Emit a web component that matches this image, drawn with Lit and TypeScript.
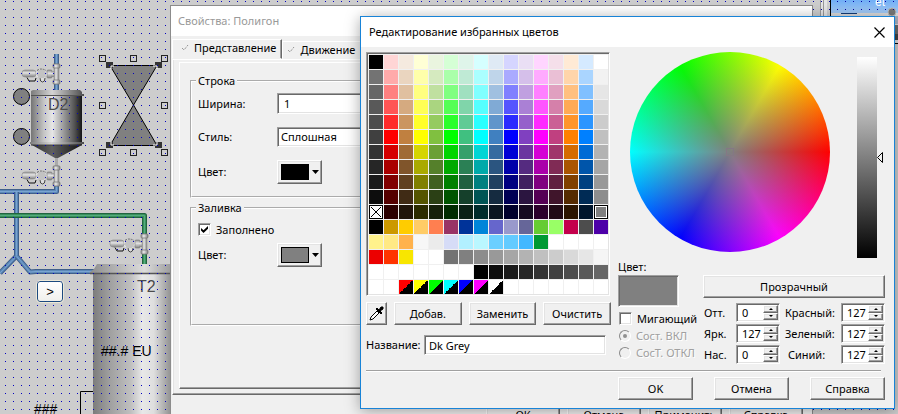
import { LitElement, html, svg, css } from "lit";
import { customElement, property, state } from "lit/decorators.js";
import { classMap } from "lit/directives/class-map.js";
import { styleMap } from "lit/directives/style-map.js";

const controls = css`
  * {
    box-sizing: border-box;
  }
  button,
  input,
  select {
    margin: 0;
    font: inherit;
    color: inherit;
    border-radius: 0;
  }
  .btn {
    display: flex;
    align-items: center;
    justify-content: center;
    height: 23px;
    padding: 0;
    background: #f0f0f0;
    border: 1px solid;
    border-color: #fff #696969 #696969 #fff;
    box-shadow: inset -1px -1px #a0a0a0, inset 1px 1px #e3e3e3;
    white-space: nowrap;
  }
  .sunken {
    border: 1px solid;
    border-color: #a0a0a0 #fff #fff #a0a0a0;
    box-shadow: inset 1px 1px #696969, inset -1px -1px #e3e3e3;
  }
  .field {
    appearance: none;
    background: #fff;
    outline: none;
    min-width: 0;
  }
  .check {
    appearance: none;
    width: 13px;
    height: 13px;
    flex: none;
    background: #fff;
    display: grid;
    place-items: center;
  }
  .check:checked::after {
    content: "";
    width: 7px;
    height: 7px;
    background: #000;
    clip-path: polygon(0 30%, 36% 62%, 100% 0, 100% 38%, 36% 100%, 0 66%);
  }
`;

const valve = (x: number, y: number) => svg`
  <g transform="translate(${x} ${y})">
    <rect x="-30" y="6" width="14" height="7" rx="3" fill="url(#steelV)" stroke="#8c8c8c" stroke-width=".6" />
    <path d="M-25 13.500l2 3.500h6l1 -3" fill="none" stroke="#111" />
    <circle cx="-10.500" cy="10" r="5" fill="#c2c2c2" stroke="#f4f4f4" stroke-dasharray="2 2" />
    <path d="M-15 6.500q4 -3 9 0" fill="none" stroke="#444" stroke-width=".8" stroke-dasharray="2 1" />
    <path d="M-12 14q0 4 2.500 4q2.500 0 2.500 -4" fill="#ddd" stroke="#222" stroke-width=".8" />
    <rect x="-5" y="6" width="5" height="8" rx="1" fill="url(#steelV)" stroke="#777" stroke-width=".6" />
    <rect x="-1" y="7" width="3" height="6" fill="url(#steelV)" />
    <rect x="2" y="0" width="5" height="20" fill="url(#steelH)" stroke="#888" stroke-width=".5" />
    <rect x="1" y="0" width="7" height="4" rx="1" fill="url(#steelH)" stroke="#707070" stroke-width=".7" />
    <rect x="1" y="16" width="7" height="4" rx="1" fill="url(#steelH)" stroke="#707070" stroke-width=".7" />
  </g>
`;

const pipe = (d: string, dark: string, mid: string, light: string) => svg`
  <path d=${d} fill="none" stroke=${dark} stroke-width="5" stroke-linejoin="round" />
  <path d=${d} fill="none" stroke=${mid} stroke-width="3" stroke-linejoin="round" />
  <path d=${d} fill="none" stroke=${light} stroke-width="1" stroke-linejoin="round" />
`;

const blue = (d: string) => pipe(d, "#3f5f8a", "#5c88b8", "#7aa4d0");
const green = (d: string) => pipe(d, "#21643f", "#38905c", "#54ac7c");

@customElement("plant-scene")
export class PlantScene extends LitElement {
  static styles = [
    controls,
    css`
      :host {
        position: absolute;
        inset: 0;
        background: #cdcdcd;
        font: 16px "Liberation Sans", Arial, sans-serif;
      }
      .drawing {
        position: absolute;
        top: 0;
        left: 0;
        width: 100%;
        height: 100%;
      }
      .corner {
        position: absolute;
        top: 0;
        right: 0;
      }
      .go {
        position: absolute;
        left: 37px;
        top: 281px;
        width: 26px;
        height: 21px;
        padding: 0;
        background: linear-gradient(#fff, #f0f0ec);
        border: 1px solid #1c4a80;
        border-radius: 3px;
        outline: 1px solid #ece9d8;
        font-size: 13px;
        line-height: 18px;
        color: #000;
      }
    `,
  ];

  render() {
    const handles = [
      [102, 58], [133, 58], [164, 58], [102, 105],
      [164, 105], [102, 152], [133, 152], [164, 152],
    ];
    const nodes = [[109, 65], [158, 65], [109, 145], [158, 145]];
    return html`
      <svg class="drawing" role="img" aria-label="Мнемосхема">
        <defs>
          <linearGradient id="steelV" x2="0" y2="1">
            <stop stop-color="#8f8f8f" /><stop offset=".4" stop-color="#e4e4e4" /><stop offset="1" stop-color="#808080" />
          </linearGradient>
          <linearGradient id="steelH">
            <stop stop-color="#8f8f8f" /><stop offset=".4" stop-color="#e8e8e8" /><stop offset="1" stop-color="#808080" />
          </linearGradient>
          <linearGradient id="tankSmall">
            <stop stop-color="#747474" /><stop offset=".25" stop-color="#c4c4c4" /><stop offset=".42" stop-color="#e6e6e6" />
            <stop offset=".6" stop-color="#a8a8a8" /><stop offset=".85" stop-color="#545454" /><stop offset="1" stop-color="#161616" />
          </linearGradient>
          <linearGradient id="rimSmall">
            <stop stop-color="#7c7c7c" /><stop offset=".4" stop-color="#d4d4d4" /><stop offset="1" stop-color="#4c4c4c" />
          </linearGradient>
          <linearGradient id="coneSmall">
            <stop stop-color="#2c2c2c" /><stop offset=".4" stop-color="#606060" /><stop offset="1" stop-color="#111" />
          </linearGradient>
          <linearGradient id="tankBig">
            <stop stop-color="#7c7c7c" /><stop offset=".18" stop-color="#a0a0a0" /><stop offset=".4" stop-color="#c0c0c0" />
            <stop offset=".52" stop-color="#e8e8e8" /><stop offset=".64" stop-color="#dedede" /><stop offset=".8" stop-color="#999" />
            <stop offset="1" stop-color="#707070" />
          </linearGradient>
          <linearGradient id="lidBig">
            <stop stop-color="#8c8c8c" /><stop offset=".5" stop-color="#dcdcdc" /><stop offset=".75" stop-color="#999" />
            <stop offset="1" stop-color="#8a8a8a" />
          </linearGradient>
          <pattern id="gridDots" width="8" height="8" patternUnits="userSpaceOnUse">
            <rect x="5" y="1" width="1" height="1" fill="#0000c0" />
          </pattern>
        </defs>

        ${blue("M56.500 54V92")}
        ${valve(52, 64)}
        <circle cx="21.500" cy="96.500" r="8" fill="#808080" stroke="#000" />
        <circle cx="21.500" cy="136.500" r="8" fill="#808080" stroke="#000" />
        <rect x="31" y="95" width="51" height="50" fill="url(#tankSmall)" />
        <path d="M33 90H80L82 92V94H84V96H31V91Z" fill="url(#rimSmall)" />
        <path d="M31 95.500H83" stroke="#555" />
        <path d="M32 145H82L58 158H55Z" fill="url(#coneSmall)" />
        <path d="M30 142H84V144H30Z" fill="url(#rimSmall)" />
        <path d="M31 145H82" stroke="#3c3c3c" />
        <rect x="55" y="158" width="3" height="8" fill="#aaa" />
        <text x="48" y="110" fill="#4c4c4c">D2</text>

        ${blue("M56.500 186V191.500H0")}
        ${blue("M16.500 192V256L0 273")}
        ${blue("M16.500 256L30 272L36 271.500H96")}
        ${valve(52, 166)}
        ${green("M0 215.500H144.500V266")}
        ${valve(140, 234)}

        <path d="M97 264H200V273H89L94 269Z" fill="url(#lidBig)" />
        <rect x="93" y="274" width="95" height="160" fill="url(#tankBig)" />
        <path d="M90 273.500H200" stroke="#555" stroke-width="1.500" />
        <text x="137" y="292" fill="#4c4c4c">T2</text>
        <text x="101" y="356" font-size="14">##.# EU</text>
        <path d="M93 391.500H80.500V420" fill="none" stroke="#000" />
        <text x="34" y="414" font-size="14">###</text>

        <path d="M110 65.500H157L133.500 105L157 145.500H110L133.500 105Z" fill="#808080" stroke="#000" />
        ${handles.map(([x, y]) => svg`<rect x=${x - 2.5} y=${y - 2.5} width="6" height="6" fill="none" stroke="#222" />`)}
        ${nodes.map(([x, y]) => svg`<rect x=${x - 3} y=${y - 3} width="7" height="6" fill="#333" />`)}
        <path d="M111 69V66H114M153 66H157V69M111 142V145H114M153 145H157V142" fill="none" stroke="#fff" />

        <rect width="100%" height="100%" fill="url(#gridDots)" />
      </svg>

      <svg class="corner" width="86" height="44" aria-hidden="true">
        <defs>
          <linearGradient id="sky" x2="0" y2="1">
            <stop stop-color="#70aef6" /><stop offset="1" stop-color="#a4cbf6" />
          </linearGradient>
          <pattern id="cornerDots" x="1" y="1" width="8" height="8" patternUnits="userSpaceOnUse">
            <rect width="1" height="1" fill="#0000a0" />
          </pattern>
        </defs>
        <rect x="8" width="7" height="44" fill="#e6e6e6" />
        <path d="M8.500 0V44M11.500 0V44" stroke="#999" />
        <rect x="15" width="3" height="44" fill="#cfcfcf" />
        <rect x="18" width="68" height="13" fill="url(#sky)" />
        <rect x="18" y="13" width="68" height="31" fill="#dcdcdc" />
        <path d="M18.500 0V44M83 43.500H86" stroke="#000" />
        <path d="M29 13.500H45" stroke="#123c78" />
        <text x="63" y="6" font-size="12" fill="#fff">et</text>
        <circle cx="80" cy="12" r="4" fill="#777" stroke="#bbb" />
        <rect x="83" y="16" width="3" height="8" fill="#a8aebc" />
        <rect x="83" y="25" width="3" height="9" fill="#6a6a6a" />
        <rect x="83" y="34" width="3" height="6" fill="#444" />
        <rect width="86" height="44" fill="url(#cornerDots)" />
      </svg>
      <button class="go">&gt;</button>
    `;
  }
}

@customElement("color-drop")
export class ColorDrop extends LitElement {
  @property() color = "#000";
  @property() label = "";
  static styles = [
    controls,
    css`
      .drop {
        width: 45px;
        height: 24px;
        justify-content: flex-start;
        gap: 3px;
        padding-left: 3px;
      }
      .chip {
        width: 28px;
        height: 16px;
        border: 1px solid #000;
      }
    `,
  ];
  render() {
    return html`<button class="btn drop" aria-label=${this.label}>
      <span class="chip" style=${styleMap({ background: this.color })}></span>
      <svg width="7" height="4"><path d="M0 0H7L3.500 4Z" /></svg>
    </button>`;
  }
}

@customElement("properties-window")
export class PropertiesWindow extends LitElement {
  static styles = [
    controls,
    css`
      :host {
        position: absolute;
        left: 170px;
        right: 85px;
        top: 5px;
        background: #f0f0f0;
        border: 1px solid #8c8c8c;
        font: 11px "Noto Sans", "Open Sans", sans-serif;
        line-height: 14px;
        color: #000;
      }
      .title {
        display: flex;
        align-items: center;
        height: 30px;
        padding: 0 7px;
        background: #fff;
        color: #999;
      }
      .body {
        padding: 3px 1px 12px;
      }
      .tabs {
        display: flex;
        align-items: flex-end;
        height: 20px;
      }
      .tab {
        display: flex;
        align-items: center;
        gap: 5px;
        height: 18px;
        padding: 0 6px 0 4px;
        background: #f0f0f0;
        border: 1px solid;
        border-color: #fff #696969 transparent #fff;
        box-shadow: inset -1px 0 #a0a0a0;
        white-space: nowrap;
      }
      .tab.active {
        height: 20px;
        padding: 0 5px 2px 8px;
      }
      .panel {
        border: 1px solid;
        border-color: #fff #696969 #696969 #fff;
        box-shadow: inset -1px -1px #a0a0a0, inset 1px 0 #e3e3e3;
        padding: 2px 6px 5px;
      }
      .page {
        display: flex;
        flex-direction: column;
        gap: 3px;
        border: 1px solid;
        border-color: #fff #696969 #696969 #fff;
        box-shadow: inset -1px -1px #a0a0a0;
        padding: 11px 11px 62px 10px;
      }
      fieldset {
        margin: 0;
        border: 2px groove #fff;
        padding: 5px 6px 12px;
      }
      fieldset.fill {
        padding: 8px 6px 57px;
      }
      legend {
        padding: 0 2px;
        margin-left: -2px;
      }
      .form {
        display: grid;
        grid-template-columns: 79px 1fr;
        row-gap: 13px;
        align-items: center;
      }
      .fill .form {
        row-gap: 7px;
      }
      .form .field {
        height: 21px;
        padding: 0 6px;
      }
      .form select.field {
        height: 20px;
        padding: 0 3px;
      }
      .tick {
        grid-column: 1 / -1;
        display: flex;
        align-items: center;
        gap: 5px;
        height: 13px;
      }
      .footer {
        display: flex;
        justify-content: flex-end;
        gap: 7px;
        padding: 8px 8px 0;
      }
      .footer .btn {
        width: 74px;
      }
    `,
  ];

  render() {
    const mark = html`<svg width="8" height="8" aria-hidden="true">
      <path d="M1 4L3 6L7 1" fill="none" stroke="#777" stroke-dasharray="1 1" />
    </svg>`;
    return html`
      <div class="title">Свойства: Полигон</div>
      <div class="body">
        <div class="tabs" role="tablist">
          <button class="tab active" role="tab" aria-selected="true">${mark}Представление</button>
          <button class="tab" role="tab">${mark}Движение</button>
          <button class="tab" role="tab">${mark}Цвет</button>
        </div>
        <div class="panel">
          <div class="page">
            <fieldset>
              <legend>Строка</legend>
              <div class="form">
                <label for="width">Ширина:</label>
                <input class="field sunken" id="width" value="1" />
                <label for="style">Стиль:</label>
                <select class="field sunken" id="style"><option>Сплошная</option></select>
                <span>Цвет:</span>
                <color-drop color="#000" label="Цвет строки"></color-drop>
              </div>
            </fieldset>
            <fieldset class="fill">
              <legend>Заливка</legend>
              <div class="form">
                <label class="tick"><input class="check sunken" type="checkbox" checked />Заполнено</label>
                <span>Цвет:</span>
                <color-drop color="#808080" label="Цвет заливки"></color-drop>
              </div>
            </fieldset>
          </div>
        </div>
        <div class="footer">
          <button class="btn">ОК</button>
          <button class="btn">Отмена</button>
          <button class="btn">Применить</button>
          <button class="btn">Справка</button>
        </div>
      </div>
    `;
  }
}

const grey = (v: number) => `rgb(${v},${v},${v})`;
const hues = [
  [255, 0, 0], [192, 128, 64], [255, 255, 0], [128, 192, 64], [0, 255, 0], [64, 192, 128], [0, 255, 255],
  [64, 128, 192], [0, 0, 255], [128, 64, 192], [255, 0, 255], [192, 64, 128], [255, 128, 0], [0, 128, 255],
];
// Row 5 holds the pure hue; rows above are tints of it, rows below are shades.
const shade = (rgb: number[], row: number) =>
  `rgb(${rgb
    .map((c) => Math.round(row < 5 ? c + ((255 - c) * (5 - row)) / 6 : (c * (11 - row)) / 6))
    .join(",")})`;
const custom = [
  "#000 #c90 #fc0 #fc6 #ff7f50 #936 #039 #0085d9 #66c #99c #669 #6c3 #9f6 #c4004c #4d4d4d #4d00a8",
  "#fff28c #ffe985 #ffb24c #f7f7f7 #ebebeb #d6dcf7 #b2f0ff #baf7ff #6bcfff #63cbff #42b8ff #093 #fff #fff #fff #fff",
  "#ec0000 #f30 #f8e600 #fff #fff #737373 #808080 #8c8c8c #999 #a6a6a6 #b3b3b3 #c0c0c0 #ccc #d9d9d9 #e6e6e6 #f5f5f5",
  "#fff #fff #fff #fff #fff #fff #fff #000 #0d0d0d #1a1a1a #262626 #333 #404040 #4c4c4c #595959 #666",
].map((row) => row.split(" "));
const blinking = ["#f00", "#ff0", "#0f0", "#0ff", "#00f", "#f0f", "#fff"];

const swatches: string[] = [];
for (let row = 0; row < 11; row++) {
  swatches.push(row === 0 ? "#000" : row === 10 ? "none" : grey(Math.round((255 * (10 - row)) / 20)));
  hues.forEach((h) => swatches.push(shade(h, row)));
  swatches.push(grey(Math.round(255 - (127 * row) / 10)));
}
custom.forEach((row) => swatches.push(...row));
for (let col = 0; col < 16; col++) {
  const pair = blinking[col - 2];
  swatches.push(pair ? `linear-gradient(135deg, ${pair} 50%, #000 50%)` : "#fff");
}

@customElement("swatch-grid")
export class SwatchGrid extends LitElement {
  @state() private selected = 175;
  static styles = [
    controls,
    css`
      .grid {
        display: grid;
        grid-template-columns: repeat(16, 14px);
        grid-auto-rows: 14px;
        gap: 1px;
        padding: 2px 1px 1px 2px;
      }
      .cell {
        display: block;
        padding: 0;
        border: 0;
      }
      .cell.on {
        border: 1px solid #000;
        box-shadow: inset 0 0 0 1px #fff;
      }
      .cell svg {
        display: block;
      }
    `,
  ];
  render() {
    return html`<div class="grid sunken">
      ${swatches.map((c, i) =>
        c === "none"
          ? html`<button class="cell" aria-label="Прозрачный">
              <svg width="14" height="14">
                <rect x=".5" y=".5" width="13" height="13" fill="#fff" stroke="#000" />
                <path d="M2 2L12 12M12 2L2 12" stroke="#000" />
              </svg>
            </button>`
          : html`<button
              class=${classMap({ cell: true, on: i === this.selected })}
              aria-label=${`Цвет ${i + 1}`}
              style=${styleMap({ background: c })}
              @click=${() => (this.selected = i)}
            ></button>`
      )}
    </div>`;
  }
}

@customElement("spin-field")
export class SpinField extends LitElement {
  @property() value = "0";
  @property() label = "";
  static styles = [
    controls,
    css`
      .spin {
        display: flex;
        height: 19px;
        background: #fff;
        padding: 1px;
      }
      .num {
        flex: 1;
        width: 0;
        border: 0;
        padding: 0 0 0 4px;
        background: none;
        outline: none;
      }
      .arrows {
        display: grid;
        grid-template-rows: 1fr 1fr;
        width: 15px;
      }
      .arrows .btn {
        height: auto;
        min-height: 0;
      }
    `,
  ];
  render() {
    return html`<div class="spin sunken">
      <input class="num" aria-label=${this.label} .value=${this.value} />
      <span class="arrows">
        <button class="btn" aria-label="Больше"><svg width="4" height="2"><path d="M0 2L2 0L4 2Z" /></svg></button>
        <button class="btn" aria-label="Меньше"><svg width="4" height="2"><path d="M0 0H4L2 2Z" /></svg></button>
      </span>
    </div>`;
  }
}

@customElement("color-dialog")
export class ColorDialog extends LitElement {
  static styles = [
    controls,
    css`
      :host {
        position: absolute;
        left: 360px;
        right: 3px;
        top: 16px;
        background: #f0f0f0;
        border: 1px solid #1883d7;
        box-shadow: 0 2px 14px rgba(0, 0, 0, 0.35);
        font: 11px "Noto Sans", "Open Sans", sans-serif;
        line-height: 14px;
        color: #000;
      }
      .title {
        display: flex;
        align-items: center;
        justify-content: space-between;
        height: 30px;
        padding: 0 9px 0 8px;
        background: #fff;
      }
      .close {
        display: grid;
        padding: 0;
        border: 0;
        background: none;
      }
      .body {
        padding: 5px 9px 8px 5px;
      }
      .main {
        display: flex;
        gap: 7px;
      }
      .left {
        flex: none;
        width: 245px;
      }
      .swatches {
        display: block;
        width: 244px;
      }
      .actions {
        display: grid;
        grid-template-columns: 21px 1fr 1fr 1fr;
        gap: 7px;
        margin: 6px 0 10px;
      }
      .name {
        display: grid;
        grid-template-columns: 58px 1fr;
        align-items: center;
        padding-right: 5px;
      }
      .name .field {
        height: 20px;
        padding: 0 4px;
      }
      .right {
        flex: 1;
      }
      .picker {
        display: flex;
        justify-content: space-between;
        padding: 0 8px 0 12px;
        margin-bottom: 2px;
      }
      .wheel {
        display: grid;
        place-items: center;
        width: 200px;
        height: 200px;
        border-radius: 50%;
        background: radial-gradient(closest-side, #808080, rgba(128, 128, 128, 0)),
          conic-gradient(from 90deg, #f00, #f0f, #00f, #0ff, #0f0, #ff0, #f00);
      }
      .spot {
        width: 8px;
        height: 8px;
        border: 1px solid #847884;
      }
      .level {
        position: relative;
        width: 20px;
        height: 201px;
        margin-top: 5px;
        background: linear-gradient(#fff, #000);
      }
      .pointer {
        position: absolute;
        left: 100%;
        top: 95px;
      }
      .settings {
        display: flex;
      }
      .state {
        width: 85px;
      }
      .caption {
        height: 15px;
      }
      .preview {
        width: 61px;
        height: 32px;
        margin-bottom: 3px;
        background: #808080;
      }
      .option {
        display: flex;
        align-items: center;
        gap: 5px;
        height: 17px;
        padding-left: 1px;
        white-space: nowrap;
      }
      .option.off {
        color: #a0a0a0;
        text-shadow: 1px 1px #fff;
      }
      .radio {
        appearance: none;
        display: grid;
        place-items: center;
        flex: none;
        width: 12px;
        height: 12px;
        border: 1px solid;
        border-color: #8a8a8a #fff #fff #8a8a8a;
      }
      .option .radio {
        border-radius: 50%;
      }
      .radio:checked::after {
        content: "";
        width: 4px;
        height: 4px;
        border-radius: 50%;
        background: #909090;
      }
      .values {
        flex: 1;
        padding-top: 15px;
      }
      .values .btn {
        width: 100%;
        margin-bottom: 5px;
      }
      .channels {
        display: grid;
        grid-template-columns: 33px 44px 1fr 44px;
        row-gap: 2px;
        align-items: center;
      }
      .first {
        padding-left: 1px;
      }
      .second {
        padding-left: 5px;
      }
      .second.mid {
        padding: 0 8px 0 0;
        text-align: center;
      }
      .rule {
        margin: 6px 4px 5px 0;
        border: 0;
        border-top: 1px solid #a0a0a0;
        border-bottom: 1px solid #fff;
      }
      .footer {
        display: flex;
        justify-content: flex-end;
        gap: 21px;
      }
      .footer .btn {
        width: 75px;
      }
    `,
  ];

  render() {
    return html`
      <div class="title">
        <span>Редактирование избранных цветов</span>
        <button class="close" aria-label="Закрыть">
          <svg width="11" height="11"><path d="M.5 .5L10.500 10.500M10.500 .5L.5 10.500" stroke="#000" stroke-width="1.200" /></svg>
        </button>
      </div>
      <div class="body">
        <div class="main">
          <div class="left">
            <swatch-grid class="swatches"></swatch-grid>
            <div class="actions">
              <button class="btn" aria-label="Пипетка">
                <svg width="15" height="15">
                  <path d="M1 14L2 11L8 5L10 7L4 13Z" fill="#fff" stroke="#000" />
                  <path d="M7 3L8 2L10 4L12 1H14V3L11 5L13 7L12 8Z" stroke="#000" />
                </svg>
              </button>
              <button class="btn">Добав.</button>
              <button class="btn">Заменить</button>
              <button class="btn">Очистить</button>
            </div>
            <div class="name">
              <label for="name">Название:</label>
              <input class="field sunken" id="name" value="Dk Grey" />
            </div>
          </div>
          <div class="right">
            <div class="picker">
              <div class="wheel"><span class="spot"></span></div>
              <div class="level">
                <svg class="pointer" width="7" height="11"><path d="M.5 5.500L5.500 .5V10.500Z" fill="#f0f0f0" stroke="#000" /></svg>
              </div>
            </div>
            <div class="settings">
              <div class="state">
                <div class="caption">Цвет:</div>
                <div class="preview sunken"></div>
                <label class="option"><input class="check sunken" type="checkbox" />Мигающий</label>
                <label class="option off"><input class="radio" type="radio" name="st" checked disabled />Сост. ВКЛ</label>
                <label class="option off"><input class="radio" type="radio" name="st" disabled />СосТ. ОТКЛ</label>
              </div>
              <div class="values">
                <button class="btn">Прозрачный</button>
                <div class="channels">
                  <span class="first">Отт.</span><spin-field label="Отт." value="0"></spin-field>
                  <span class="second">Красный:</span><spin-field label="Красный" value="127"></spin-field>
                  <span class="first">Ярк.</span><spin-field label="Ярк." value="127"></spin-field>
                  <span class="second">Зеленый:</span><spin-field label="Зеленый" value="127"></spin-field>
                  <span class="first">Нас.</span><spin-field label="Нас." value="0"></spin-field>
                  <span class="second mid">Синий:</span><spin-field label="Синий" value="127"></spin-field>
                </div>
              </div>
            </div>
          </div>
        </div>
        <hr class="rule" />
        <div class="footer">
          <button class="btn">OK</button>
          <button class="btn">Отмена</button>
          <button class="btn">Справка</button>
        </div>
      </div>
    `;
  }
}

@customElement("app-root")
export class AppRoot extends LitElement {
  static styles = css`
    :host {
      display: block;
      position: relative;
      height: 100vh;
      overflow: hidden;
    }
  `;
  render() {
    return html`
      <plant-scene></plant-scene>
      <properties-window></properties-window>
      <color-dialog></color-dialog>
    `;
  }
}
